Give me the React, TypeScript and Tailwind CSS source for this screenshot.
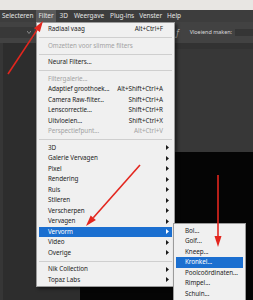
import React from "react";

const font = { fontFamily: '"Noto Sans", "Open Sans", sans-serif' };

type Item =
  | { kind: "sep" }
  | { kind: "item"; label: string; shortcut?: string; disabled?: boolean; sub?: boolean; active?: boolean };

const filterMenu: Item[] = [
  { kind: "item", label: "Radiaal vaag", shortcut: "Alt+Ctrl+F" },
  { kind: "sep" },
  { kind: "item", label: "Omzetten voor slimme filters", disabled: true },
  { kind: "sep" },
  { kind: "item", label: "Neural Filters..." },
  { kind: "sep" },
  { kind: "item", label: "Filtergalerie...", disabled: true },
  { kind: "item", label: "Adaptief groothoek...", shortcut: "Alt+Shift+Ctrl+A" },
  { kind: "item", label: "Camera Raw-filter...", shortcut: "Shift+Ctrl+A" },
  { kind: "item", label: "Lenscorrectie...", shortcut: "Shift+Ctrl+R" },
  { kind: "item", label: "Uitvloeien...", shortcut: "Shift+Ctrl+X" },
  { kind: "item", label: "Perspectiefpunt...", shortcut: "Alt+Ctrl+V", disabled: true },
  { kind: "sep" },
  { kind: "item", label: "3D", sub: true },
  { kind: "item", label: "Galerie Vervagen", sub: true },
  { kind: "item", label: "Pixel", sub: true },
  { kind: "item", label: "Rendering", sub: true },
  { kind: "item", label: "Ruis", sub: true },
  { kind: "item", label: "Stileren", sub: true },
  { kind: "item", label: "Verscherpen", sub: true },
  { kind: "item", label: "Vervagen", sub: true },
  { kind: "item", label: "Vervorm", sub: true, active: true },
  { kind: "item", label: "Video", sub: true },
  { kind: "item", label: "Overige", sub: true },
  { kind: "sep" },
  { kind: "item", label: "Nik Collection", sub: true },
  { kind: "item", label: "Topaz Labs", sub: true },
];

const subMenu = ["Bol...", "Golf...", "Kneep...", "Kronkel...", "Poolcoördinaten...", "Rimpel...", "Schuin..."];

function SubArrow({ light }: { light?: boolean }) {
  return (
    <svg width="3" height="5" viewBox="0 0 3 5" className="shrink-0">
      <path d="M0 0 L3 2.5 L0 5 Z" fill={light ? "#ffffff" : "#1a1a1a"} />
    </svg>
  );
}

function MenuRow({ item }: { item: Item }) {
  if (item.kind === "sep") {
    return (
      <div className="h-[6px] flex items-center px-[2px]">
        <div className="h-px w-full bg-[#cfcfcf]" />
      </div>
    );
  }
  const color = item.active ? "text-white" : item.disabled ? "text-[#a3a3a3]" : "text-[#1d1d1d]";
  return (
    <div
      className={`h-[10.5px] mx-[2px] flex items-center pl-[9px] pr-[3px] ${item.active ? "bg-[#1b6fd0]" : ""} ${color}`}
    >
      <span className="flex-1 whitespace-nowrap">{item.label}</span>
      {item.shortcut && <span className="whitespace-nowrap mr-[6px]">{item.shortcut}</span>}
      {item.sub && <SubArrow light={item.active} />}
    </div>
  );
}

function Arrow({ x1, y1, x2, y2 }: { x1: number; y1: number; x2: number; y2: number }) {
  const a = Math.atan2(y2 - y1, x2 - x1);
  const len = 11;
  const w = 3.5;
  const bx = x2 - len * Math.cos(a);
  const by = y2 - len * Math.sin(a);
  const px = -Math.sin(a) * w;
  const py = Math.cos(a) * w;
  return (
    <g>
      <line x1={x1} y1={y1} x2={bx} y2={by} stroke="#e3261e" strokeWidth="1.6" />
      <polygon points={`${x2},${y2} ${bx + px},${by + py} ${bx - px},${by - py}`} fill="#e3261e" />
    </g>
  );
}

export default function App() {
  return (
    <div
      className="relative w-[253px] h-[300px] overflow-hidden bg-[#2c2c2c] text-[6.3px] leading-none tracking-[-0.05px]"
      style={font}
    >
      {/* Window title strip */}
      <div className="h-[10px] bg-[#e8e6e3]" />

      {/* Menu bar */}
      <div className="h-[12px] bg-[#3d3d3d] flex items-center pl-[2px] text-[#e4e4e4] text-[6.5px]">
        <span className="mr-[3px]">Selecteren</span>
        <span className="bg-[#5a5a5a] h-full flex items-center px-[2px] mr-[4px]">Filter</span>
        <span className="mr-[6px]">3D</span>
        <span className="mr-[6px]">Weergave</span>
        <span className="mr-[5px]">Plug-ins</span>
        <span className="mr-[5px]">Venster</span>
        <span>Help</span>
      </div>

      {/* Options bar */}
      <div className="h-[21px] bg-[#424242] flex items-center text-[#d8d8d8] text-[5.5px]">
        <div className="w-[34px] h-[11px] bg-[#383838] flex items-center justify-end pr-[3px]">
          <svg width="4" height="3" viewBox="0 0 4 3">
            <path d="M0 0 L2 2.5 L4 0" stroke="#a0a0a0" strokeWidth="0.8" fill="none" />
          </svg>
        </div>
        <div className="flex-1" />
        <span className="text-[8px] text-[#bdbdbd] mr-[11px] italic">ƒ</span>
        <span className="mr-[3px] whitespace-nowrap">Vloeiend maken:</span>
        <div className="w-[18px] h-[7px] bg-[#353535]" />
      </div>

      {/* Workspace */}
      <div className="flex h-[257px]">
        <div className="w-[80px] bg-[#2d2d2d] border-l-[3px] border-[#363636]" />
        <div className="flex-1 flex flex-col">
          <div className="h-[109px] bg-[#373737] border-t-[6px] border-[#323232]" />
          <div className="flex-1 bg-[#050505]" />
        </div>
      </div>

      {/* Filter dropdown */}
      <div className="absolute left-[36px] top-[22px] w-[139px] bg-[#f0f0f0] border border-[#9b9b9b] py-px shadow-[2px_2px_3px_rgba(0,0,0,0.5)]">
        {filterMenu.map((item, i) => (
          <MenuRow key={i} item={item} />
        ))}
      </div>

      {/* Vervorm submenu */}
      <div className="absolute left-[173px] top-[223px] w-[73px] h-[90px] bg-[#f0f0f0] border border-[#9b9b9b] pt-[1.5px] shadow-[2px_2px_3px_rgba(0,0,0,0.5)]">
        {subMenu.map((label) => (
          <div
            key={label}
            className={`h-[10.5px] mx-[2px] flex items-center pl-[9px] whitespace-nowrap ${label === "Kronkel..." ? "bg-[#1b6fd0] text-white" : "text-[#1d1d1d]"}`}
          >
            {label}
          </div>
        ))}
      </div>

      {/* Red annotation arrows */}
      <svg className="absolute inset-0 pointer-events-none" width="253" height="300" viewBox="0 0 253 300">
        <Arrow x1={8} y1={74} x2={43} y2={21} />
        <Arrow x1={140} y1={165} x2={86} y2={226} />
        <Arrow x1={218} y1={175} x2={218} y2={247} />
      </svg>
    </div>
  );
}
